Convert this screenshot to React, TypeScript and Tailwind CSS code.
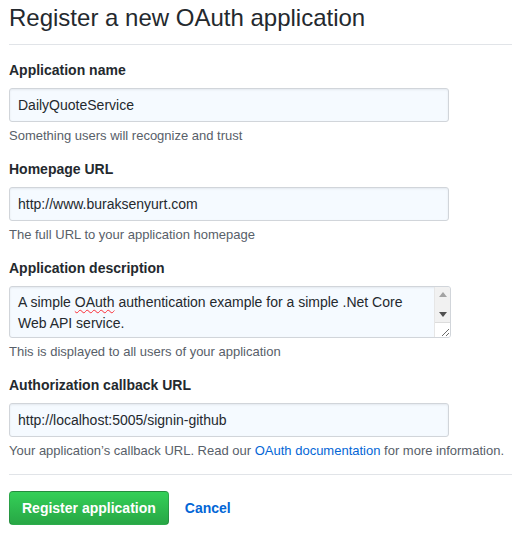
const fieldClass =
  "w-[440px] h-[34px] px-2 flex items-center text-sm text-[#24292e] bg-[#f5faff] border border-[#d1d5da] rounded-[3px] shadow-[inset_0_1px_2px_rgba(27,31,35,0.075)]";

const Field = ({ label, value, note }: { label: string; value: string; note: React.ReactNode }) => (
  <div className="mb-[14px]">
    <div className="text-sm font-bold leading-[21px] mb-[7px] text-[#24292e]">{label}</div>
    <div className={fieldClass}>{value}</div>
    <p className="mt-[5px] text-[13px] leading-[18px] text-[#586069]">{note}</p>
  </div>
);

const App = () => {
  return (
    <div
      className="bg-white min-h-screen pl-[9px] text-[#24292e]"
      style={{ fontFamily: '"Liberation Sans", Arial, sans-serif' }}
    >
      {/* Header */}
      <div className="border-b border-[#e1e4e8] pb-2 mb-[15px]">
        <h1 className="text-2xl leading-[36px] font-normal">Register a new OAuth application</h1>
      </div>

      <Field label="Application name" value="DailyQuoteService" note="Something users will recognize and trust" />
      <Field label="Homepage URL" value="http://www.buraksenyurt.com" note="The full URL to your application homepage" />

      {/* Description */}
      <div className="mb-[14px]">
        <div className="text-sm font-bold leading-[21px] mb-[7px]">Application description</div>
        <div className="w-[442px] h-[52px] flex bg-[#f5faff] border border-[#d1d5da] rounded-[3px] overflow-hidden shadow-[inset_0_1px_2px_rgba(27,31,35,0.075)]">
          <div className="flex-1 px-2 pt-[5px] text-sm leading-[21px]">
            A simple <span className="underline decoration-wavy decoration-red-500 decoration-1 underline-offset-2">OAuth</span> authentication example for a simple .Net Core Web API service.
          </div>
          <div className="w-[16px] flex flex-col border-l border-[#e6e6e6]">
            <div className="flex-1 bg-[#f1f1f1] flex flex-col items-center justify-between py-[5px]">
              <svg width="8" height="5" viewBox="0 0 8 5">
                <path d="M0 5 L4 0 L8 5 Z" fill="#a3a3a3" />
              </svg>
              <svg width="8" height="5" viewBox="0 0 8 5">
                <path d="M0 0 L8 0 L4 5 Z" fill="#505050" />
              </svg>
            </div>
            <div className="h-[15px] bg-white border-t border-[#dcdcdc] flex items-end justify-end">
              <svg width="10" height="10" viewBox="0 0 10 10">
                <path d="M9 2 L2 9 M9 6 L6 9" stroke="#6b6b6b" strokeWidth="1" />
              </svg>
            </div>
          </div>
        </div>
        <p className="mt-[5px] text-[13px] leading-[18px] text-[#586069]">This is displayed to all users of your application</p>
      </div>

      <Field
        label="Authorization callback URL"
        value="http://localhost:5005/signin-github"
        note={
          <>
            Your application’s callback URL. Read our <a className="text-[#0366d6]">OAuth documentation</a> for more information.
          </>
        }
      />

      {/* Actions */}
      <div className="border-t border-[#e1e4e8] pt-[16px] flex items-center">
        <button className="h-[34px] px-3 text-sm font-bold text-white rounded-[4px] border border-[rgba(27,31,35,0.2)] bg-gradient-to-b from-[#34d058] to-[#28a745]">
          Register application
        </button>
        <a className="ml-[16px] text-sm font-bold text-[#0366d6]">Cancel</a>
      </div>
    </div>
  );
};

export default App;
